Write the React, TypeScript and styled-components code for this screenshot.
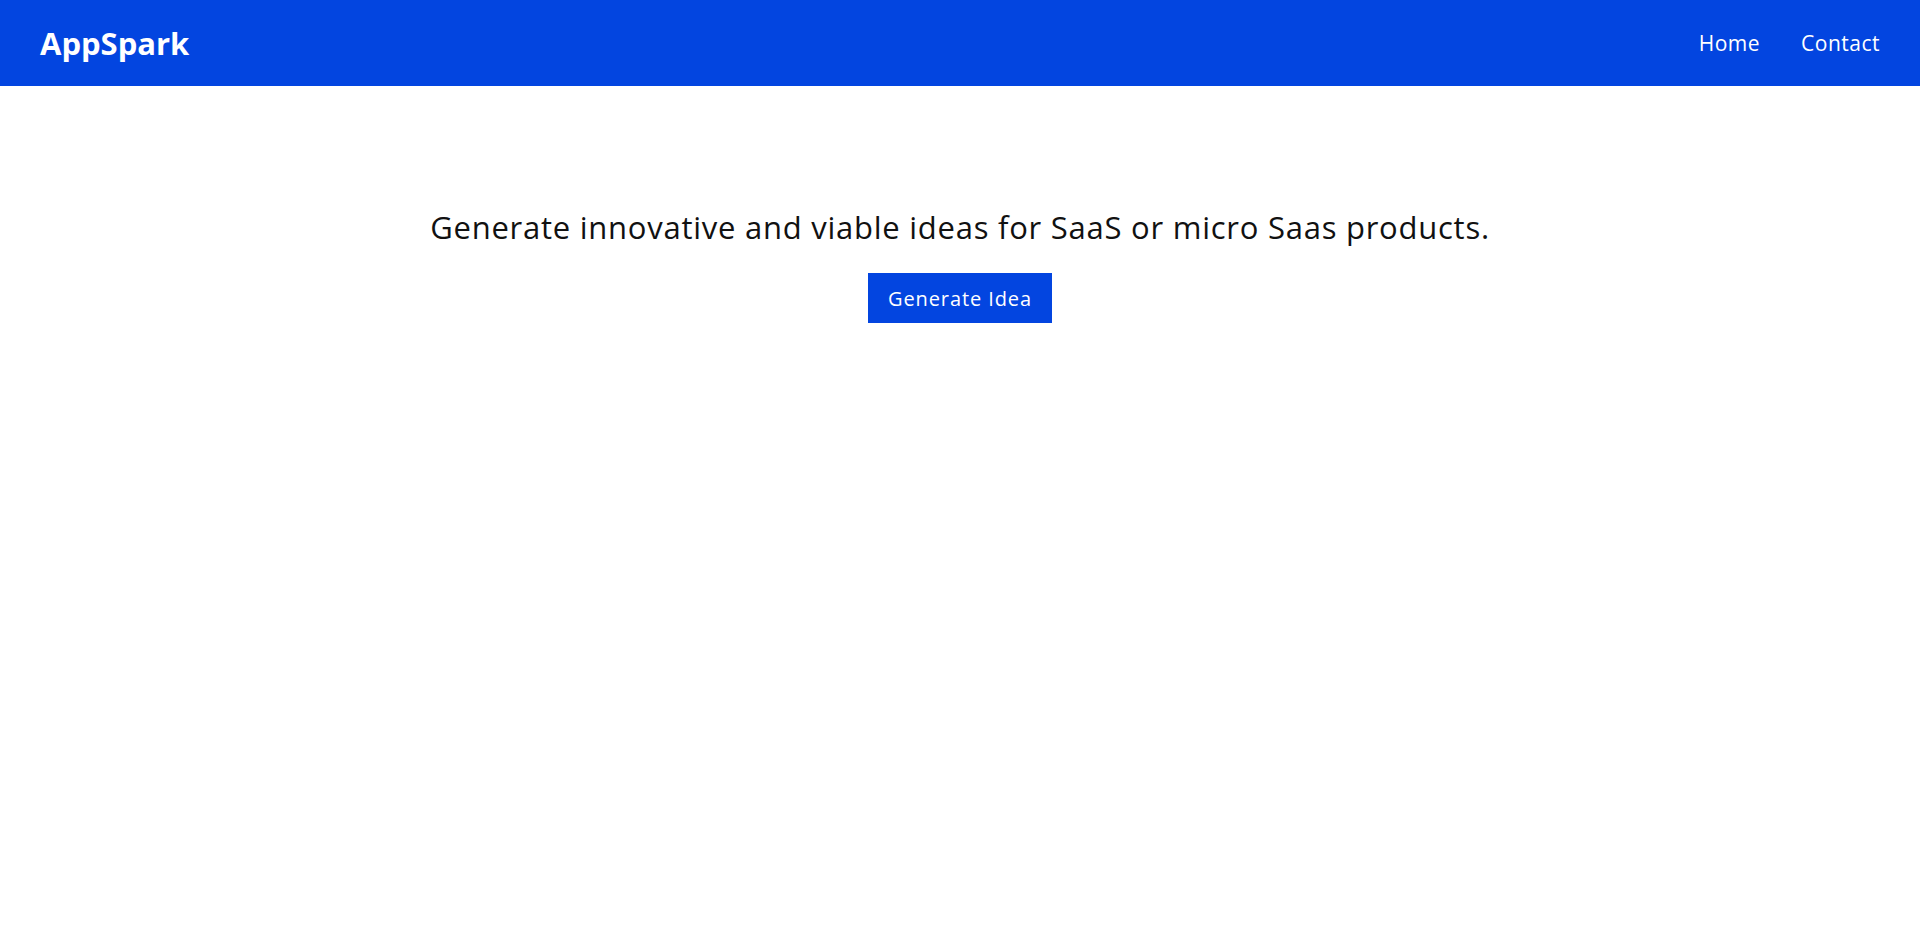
import React from 'react';
import styled, { createGlobalStyle } from 'styled-components';

const GlobalStyle = createGlobalStyle`
	* {
		box-sizing: border-box;
	}
	body {
		margin: 0;
		background: #ffffff;
		font-family: 'Open Sans', 'Noto Sans', sans-serif;
		color: #111111;
	}
`;

const Header = styled.header`
	height: 86px;
	background-color: #0345e0;
	display: flex;
	align-items: center;
	justify-content: space-between;
	padding: 0 40px;
`;

const Logo = styled.a`
	color: #ffffff;
	font-size: 31px;
	font-weight: 700;
	text-decoration: none;
`;

const Nav = styled.nav`
	display: flex;
	align-items: center;
	gap: 41px;
`;

const NavLink = styled.a`
	color: #ffffff;
	font-size: 21px;
	letter-spacing: 0.5px;
	text-decoration: none;
`;

const Main = styled.main`
	display: flex;
	flex-direction: column;
	align-items: center;
	padding-top: 120px;
`;

const Headline = styled.h1`
	margin: 0 0 25px;
	font-size: 31px;
	font-weight: 400;
	letter-spacing: 0.75px;
	color: #111111;
`;

const PrimaryButton = styled.button`
	border: none;
	outline: none;
	background-color: #0345e0;
	color: #ffffff;
	font-family: inherit;
	font-size: 20px;
	letter-spacing: 0.9px;
	width: 184px;
	height: 50px;
	cursor: pointer;
`;

export default function App() {
	return (
		<>
			<GlobalStyle />
			<Header>
				<Logo href="#">AppSpark</Logo>
				<Nav>
					<NavLink href="#">Home</NavLink>
					<NavLink href="#">Contact</NavLink>
				</Nav>
			</Header>
			<Main>
				<Headline>Generate innovative and viable ideas for SaaS or micro Saas products.</Headline>
				<PrimaryButton>Generate Idea</PrimaryButton>
			</Main>
		</>
	);
}
